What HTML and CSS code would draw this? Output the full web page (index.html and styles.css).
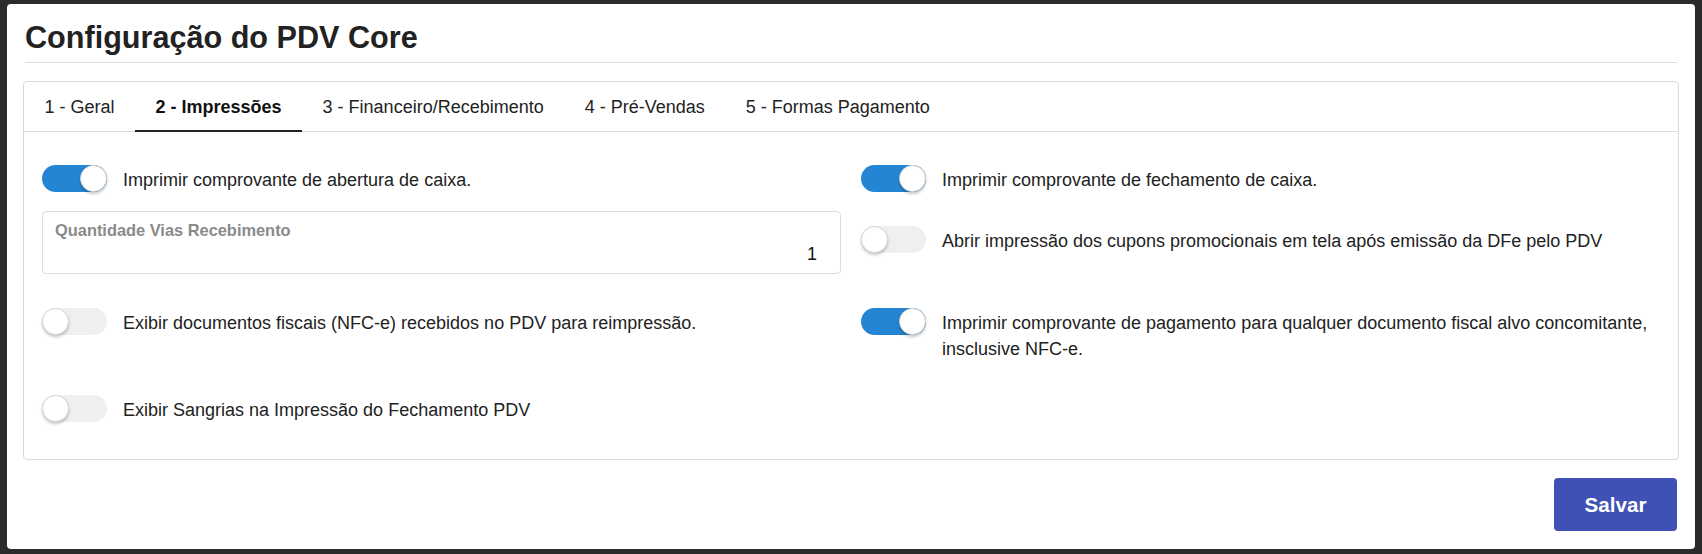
FILE: index.html
```html
<!DOCTYPE html>
<html lang="pt-BR">
<head>
<meta charset="utf-8">
<title>Configuração do PDV Core</title>
<link rel="stylesheet" href="styles.css">
</head>
<body>
<div class="dialog">
  <h1 class="title">Configuração do PDV Core</h1>
  <hr class="divider">
  <div class="card">
    <div class="tabs">
      <div class="tab">1 - Geral</div>
      <div class="tab active">2 - Impressões</div>
      <div class="tab">3 - Financeiro/Recebimento</div>
      <div class="tab">4 - Pré-Vendas</div>
      <div class="tab">5 - Formas Pagamento</div>
    </div>
    <div class="content">
      <div class="item">
        <span class="switch on"><span class="knob"></span></span>
        <span class="label">Imprimir comprovante de abertura de caixa.</span>
      </div>
      <div class="item">
        <span class="switch on"><span class="knob"></span></span>
        <span class="label">Imprimir comprovante de fechamento de caixa.</span>
      </div>
      <div class="field">
        <div class="field-label">Quantidade Vias Recebimento</div>
        <div class="field-value">1</div>
      </div>
      <div class="item offset">
        <span class="switch"><span class="knob"></span></span>
        <span class="label">Abrir impressão dos cupons promocionais em tela após emissão da DFe pelo PDV</span>
      </div>
      <div class="item">
        <span class="switch"><span class="knob"></span></span>
        <span class="label">Exibir documentos fiscais (NFC-e) recebidos no PDV para reimpressão.</span>
      </div>
      <div class="item">
        <span class="switch on"><span class="knob"></span></span>
        <span class="label">Imprimir comprovante de pagamento para qualquer documento fiscal alvo concomitante, insclusive NFC-e.</span>
      </div>
      <div class="item">
        <span class="switch"><span class="knob"></span></span>
        <span class="label">Exibir Sangrias na Impressão do Fechamento PDV</span>
      </div>
      <div></div>
    </div>
  </div>
  <div class="footer">
    <button class="btn">Salvar</button>
  </div>
</div>
</body>
</html>
```

FILE: styles.css
```css
html, body {
  margin: 0;
  padding: 0;
}
body {
  background: #2b2b2b;
  font-family: "Liberation Sans", Arial, sans-serif;
  color: #222;
  height: 554px;
  overflow: hidden;
  padding-top: 4px;
  box-sizing: border-box;
}
.dialog {
  margin: 0 7px;
  background: #fff;
  border-radius: 4px;
  padding: 16px 16px 18px 16px;
}
.title {
  margin: 0 0 0 2px;
  font-size: 30.6px;
  line-height: 34px;
  font-weight: bold;
  color: #222;
}
.divider {
  margin: 8px 2px 0 2px;
  border: 0;
  border-top: 1px solid #dcdcdc;
  height: 0;
}
.card {
  margin-top: 18px;
  border: 1px solid #dadada;
  border-radius: 4px;
}
.tabs {
  display: flex;
  border-bottom: 1px solid #dcdcdc;
}
.tab {
  padding: 15px 20.5px 13px 20.5px;
  font-size: 18px;
  line-height: 20px;
  border-bottom: 2px solid transparent;
  margin-bottom: -1px;
  color: #222;
  white-space: nowrap;
}
.tab.active {
  font-weight: bold;
  color: #111;
  border-bottom-color: #222;
}
.content {
  display: grid;
  grid-template-columns: 1fr 1fr;
  grid-template-rows: 46px 97px 87px 27px;
  column-gap: 20px;
  padding: 33px 18px 37px 18px;
  align-items: start;
}
.item {
  display: flex;
  align-items: flex-start;
}
.item.offset {
  margin-top: 15px;
}
.switch {
  flex: none;
  position: relative;
  width: 65px;
  height: 27px;
  border-radius: 14px;
  background: #efefef;
}
.switch.on {
  background: #2385d3;
}
.knob {
  position: absolute;
  top: 0;
  left: 0;
  width: 27px;
  height: 27px;
  border-radius: 50%;
  background: #fff;
  box-sizing: border-box;
  border: 1px solid #d6d6d6;
  box-shadow: 0 2px 3px rgba(0, 0, 0, 0.22);
}
.switch.on .knob {
  left: 38px;
}
.label {
  margin-left: 16px;
  margin-top: 2px;
  font-size: 18px;
  line-height: 26px;
  color: #222;
}
.field {
  border: 1px solid #dcdcdc;
  border-radius: 4px;
  padding: 9px 23px 9px 12px;
}
.field-label {
  font-size: 16.4px;
  line-height: 19px;
  font-weight: bold;
  color: #8a8a8a;
}
.field-value {
  margin-top: 4px;
  font-size: 18px;
  line-height: 20px;
  text-align: right;
  color: #111;
}
.footer {
  display: flex;
  justify-content: flex-end;
  margin-top: 18px;
  padding-right: 2px;
}
.btn {
  width: 123px;
  height: 53px;
  border: 0;
  border-radius: 4px;
  background: #3f51b5;
  color: #fff;
  font-family: "Liberation Sans", Arial, sans-serif;
  font-weight: bold;
  font-size: 20.6px;
  padding: 0;
}
```
